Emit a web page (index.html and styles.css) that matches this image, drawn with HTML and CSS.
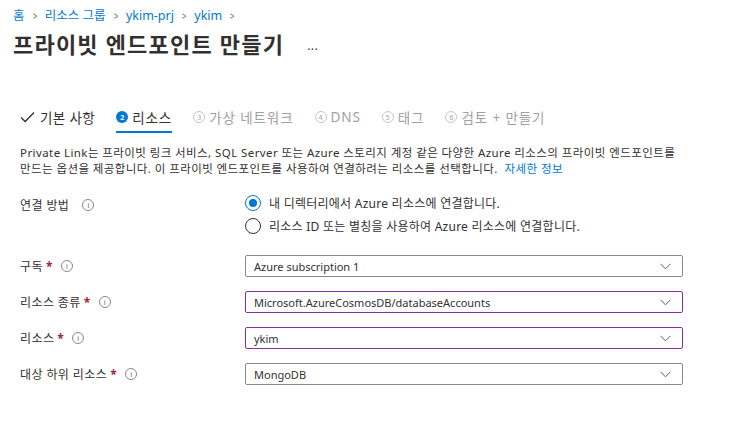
FILE: index.html
```html
<!DOCTYPE html>
<html lang="ko">
<head>
<meta charset="utf-8">
<link rel="stylesheet" href="styles.css">
</head>
<body>
<div class="page">
  <nav class="crumbs">
    <a>홈</a><span class="sep">&gt;</span>
    <a>리소스 그룹</a><span class="sep">&gt;</span>
    <a>ykim-prj</a><span class="sep">&gt;</span>
    <a>ykim</a><span class="sep">&gt;</span>
  </nav>
  <div class="titlebar">
    <h1>프라이빗 엔드포인트 만들기</h1>
    <span class="more">...</span>
  </div>

  <div class="tabs">
    <div class="tab done">
      <svg class="check" width="15" height="12" viewBox="0 0 15 12"><path d="M1 6.5 L5.2 10.5 L14 1.5" fill="none" stroke="#323130" stroke-width="1.3"/></svg>
      <span>기본 사항</span>
    </div>
    <div class="tab active"><span class="num">2</span><span>리소스</span></div>
    <div class="tab off"><span class="num">3</span><span>가상 네트워크</span></div>
    <div class="tab off"><span class="num">4</span><span>DNS</span></div>
    <div class="tab off"><span class="num">5</span><span>태그</span></div>
    <div class="tab off"><span class="num">6</span><span>검토 + 만들기</span></div>
  </div>

  <p class="desc">Private Link는 프라이빗 링크 서비스, SQL Server 또는 Azure 스토리지 계정 같은 다양한 Azure 리소스의 프라이빗 엔드포인트를<br>만드는 옵션을 제공합니다. 이 프라이빗 엔드포인트를 사용하여 연결하려는 리소스를 선택합니다. &nbsp;<a class="link">자세한 정보</a></p>

  <div class="form">
    <div class="label method">연결 방법 <span class="info">i</span></div>
    <div class="radios">
      <div class="radio"><span class="dot on"></span><span>내 디렉터리에서 Azure 리소스에 연결합니다.</span></div>
      <div class="radio"><span class="dot"></span><span>리소스 ID 또는 별칭을 사용하여 Azure 리소스에 연결합니다.</span></div>
    </div>

    <div class="label">구독 <span class="req">*</span> <span class="info">i</span></div>
    <div class="select"><span>Azure subscription 1</span><svg class="chev" width="11" height="7" viewBox="0 0 11 7"><path d="M0.5 0.8 L5.5 5.8 L10.5 0.8" fill="none" stroke="#605e5c" stroke-width="1"/></svg></div>

    <div class="label">리소스 종류 <span class="req">*</span> <span class="info">i</span></div>
    <div class="select hl"><span>Microsoft.AzureCosmosDB/databaseAccounts</span><svg class="chev" width="11" height="7" viewBox="0 0 11 7"><path d="M0.5 0.8 L5.5 5.8 L10.5 0.8" fill="none" stroke="#605e5c" stroke-width="1"/></svg></div>

    <div class="label">리소스 <span class="req">*</span> <span class="info">i</span></div>
    <div class="select hl"><span>ykim</span><svg class="chev" width="11" height="7" viewBox="0 0 11 7"><path d="M0.5 0.8 L5.5 5.8 L10.5 0.8" fill="none" stroke="#605e5c" stroke-width="1"/></svg></div>

    <div class="label">대상 하위 리소스 <span class="req">*</span> <span class="info">i</span></div>
    <div class="select"><span>MongoDB</span><svg class="chev" width="11" height="7" viewBox="0 0 11 7"><path d="M0.5 0.8 L5.5 5.8 L10.5 0.8" fill="none" stroke="#605e5c" stroke-width="1"/></svg></div>
  </div>
</div>
</body>
</html>
```
FILE: styles.css
```css
html, body {
  margin: 0;
  background: #fff;
}
body {
  font-family: "Noto Sans", "Noto Sans CJK KR", sans-serif;
  color: #323130;
  width: 741px;
  height: 434px;
  overflow: hidden;
}
.page {
  padding: 0 20px 0 20px;
}
.crumbs {
  margin-left: -7px;
  padding-top: 7px;
  height: 18px;
  line-height: 18px;
  font-size: 12.5px;
  display: flex;
  align-items: center;
}
.crumbs a {
  color: #0078d4;
}
.crumbs .sep {
  color: #605e5c;
  font-size: 11px;
  margin: 0 7px;
  transform: scaleX(0.7);
  display: inline-block;
}
.titlebar {
  margin-left: -7px;
  margin-top: 5px;
  height: 28px;
  display: flex;
  align-items: center;
}
.titlebar h1 {
  margin: 0;
  font-size: 22px;
  font-weight: 700;
  line-height: 28px;
  letter-spacing: 1.2px;
}
.more {
  margin-left: 23px;
  font-size: 12px;
  margin-top: 2px;
  letter-spacing: 0.5px;
  color: #323130;
}
.tabs {
  margin-top: 49px;
  display: flex;
  gap: 21px;
  font-size: 13.5px;
  letter-spacing: 0.9px;
}
.tab {
  display: flex;
  align-items: center;
  gap: 4px;
  height: 20px;
  padding-bottom: 4px;
  border-bottom: 2px solid transparent;
}
.tab.active {
  border-bottom-color: #0078d4;
}
.tab.done {
  letter-spacing: 0.4px;
}
.tab.off {
  color: #a19f9d;
}
.num {
  width: 12px;
  height: 12px;
  border-radius: 50%;
  font-size: 7px;
  font-weight: 700;
  letter-spacing: 0;
  display: inline-flex;
  align-items: center;
  justify-content: center;
  box-sizing: border-box;
}
.active .num {
  background: #0078d4;
  color: #fff;
}
.off .num {
  border: 1px solid #c8c6c4;
  color: #a19f9d;
  font-weight: 400;
}
.check {
  margin-right: 1px;
}
.desc {
  margin: 12px 0 0 0;
  font-size: 11.5px;
  line-height: 16px;
  letter-spacing: 0.42px;
  white-space: nowrap;
}
.link {
  color: #0078d4;
}
.form {
  margin-top: 16px;
  display: grid;
  grid-template-columns: 225px 438px;
  row-gap: 14px;
  font-size: 12px;
  align-items: center;
}
.label {
  display: flex;
  align-items: center;
  gap: 3px;
  letter-spacing: 0.4px;
}
.label.method {
  align-self: start;
  padding-top: 3px;
  gap: 8px;
}
.req {
  color: #a4262c;
  font-weight: 700;
}
.info {
  width: 10px;
  height: 10px;
  border: 1px solid #8a8886;
  border-radius: 50%;
  font-size: 7px;
  color: #605e5c;
  display: inline-flex;
  align-items: center;
  justify-content: center;
  margin-left: 5px;
  line-height: 1;
  letter-spacing: 0;
}
.radios {
  display: flex;
  flex-direction: column;
  gap: 6px;
  margin-bottom: 7px;
  letter-spacing: 0.25px;
  padding-top: 1px;
}
.radio {
  display: flex;
  align-items: center;
  gap: 8px;
  height: 17px;
}
.dot {
  width: 16px;
  height: 16px;
  box-sizing: border-box;
  border: 1px solid #323130;
  border-radius: 50%;
  display: inline-flex;
  align-items: center;
  justify-content: center;
}
.dot.on {
  border-color: #0078d4;
}
.dot.on::after {
  content: "";
  width: 8px;
  height: 8px;
  border-radius: 50%;
  background: #0078d4;
}
.select {
  height: 22px;
  box-sizing: border-box;
  border: 1px solid #8a8886;
  border-radius: 2px;
  display: flex;
  align-items: center;
  justify-content: space-between;
  padding: 0 11px 0 8px;
  font-size: 11px;
}
.select.hl {
  border-color: #8a2da8;
}
```
